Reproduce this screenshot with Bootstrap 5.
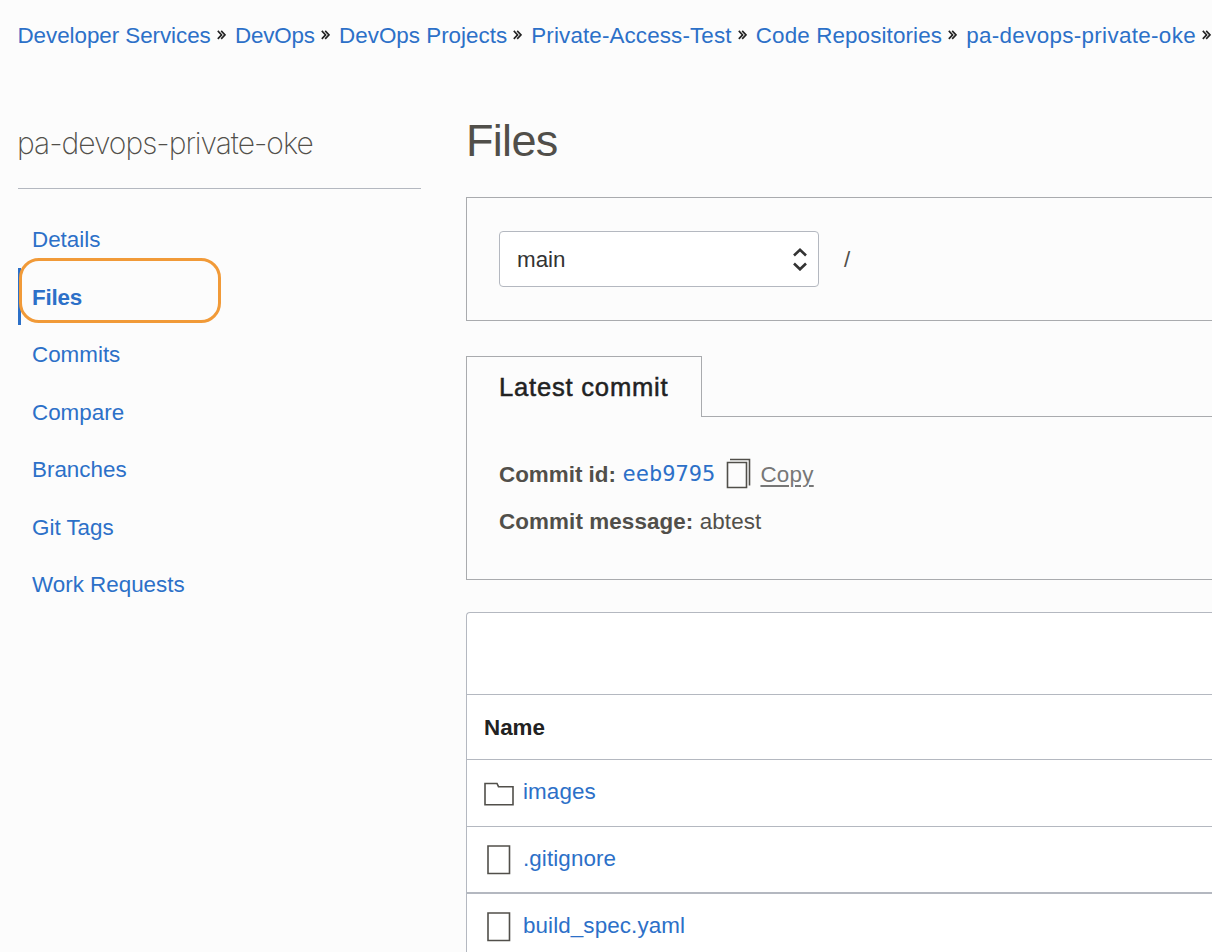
<!DOCTYPE html>
<html lang="en">
<head>
<meta charset="utf-8">
<meta name="viewport" content="width=device-width, initial-scale=1">
<title>pa-devops-private-oke - Files</title>
<link href="https://cdn.jsdelivr.net/npm/bootstrap@5.3.0/dist/css/bootstrap.min.css" rel="stylesheet">
<script src="https://cdn.jsdelivr.net/npm/bootstrap@5.3.0/dist/js/bootstrap.bundle.min.js" defer></script>
<style>
body{background:#fcfcfc;color:#514f4a;font-family:"Liberation Sans",Arial,sans-serif;font-size:22.4px;line-height:30px;overflow:hidden;height:952px}
a{color:#2c70c8;text-decoration:none}
.crumbs{height:70px;padding:2px 0 0 17.5px}
.crumbs svg{margin:0 9px 2px 6.2px;flex:none}
#c1{letter-spacing:-.05px}
#c2{letter-spacing:-.15px}
#c4{letter-spacing:.13px}
#c5{letter-spacing:.12px}
#c6{letter-spacing:.33px}
.side{width:403px;margin-left:18px;margin-right:45px;padding-top:48px}
.side-title{font-family:Inter,sans-serif;font-weight:200;font-size:30px;letter-spacing:-1px;line-height:50px;height:71px;border-bottom:1px solid #b4b8c0;margin-bottom:21px}
.side-title span{margin-left:-1px}
.side .nav-link{height:57.5px;line-height:57.5px;padding:1px 0 0 14px;color:#2c70c8}
.side .active{font-weight:700;letter-spacing:-.2px;box-shadow:inset 3px 0 #2c70c8}
.ring{left:.5px;top:-10px;width:202px;height:65px;border:3px solid #f19a38;border-radius:20px}
h1{font-size:45px;font-weight:400;letter-spacing:-.7px;line-height:50px;padding-top:46px;height:127px;margin:0;color:#514f4a}
.panel{border:1px solid #a9abae;border-right:0}
.path-box{height:124px;padding-left:32px}
.pick{width:320px;height:56px;border:1px solid #b4b8c0;border-radius:4px;background:#fff;color:#333;padding:0 10px 0 17px}
.pick span,.slash{padding-top:2px}
.slash{margin-left:25px}
.tab{width:236px;height:61px;border:1px solid #a9abae;border-bottom:0;margin-top:35px;padding-left:32px;font-size:25.6px;letter-spacing:.78px;color:#222;-webkit-text-stroke:.5px #222}
.tabline{border-bottom:1px solid #a9abae;margin-top:35px;height:61px}
.commit{height:163px;border:1px solid #a9abae;border-width:0 0 1px 1px;padding:41px 0 0 32px}
.commit-id{height:32px;margin-bottom:17px}
.commit-id b{padding-top:2px;margin-right:6.5px}
.hash{font-family:"DejaVu Sans Mono",monospace;font-size:22px}
.icopy{margin:0 9px 0 11.3px}
.copy{color:#777;letter-spacing:.25px;padding-top:2px;text-decoration:underline;text-underline-offset:3px;text-decoration-thickness:1.5px}
.message{letter-spacing:.1px}
.files{margin-top:32px;height:360px;border:1px solid #b4b8c0;border-width:1px 0 0 1px;border-radius:4px 0 0 0;background:#fff}
.frow{border-bottom:1px solid #b4b8c0;padding-left:17px}
.frow svg{margin-right:9px;flex:none}
.frow a{padding-bottom:2px;letter-spacing:.1px}
.frow-top{height:82px}
.frow-head{height:65px;color:#222;padding-top:2px}
.frow-item{height:67px}
.frow-thick{border-bottom-width:2px}
</style>
</head>
<body>
<svg class="d-none"><symbol id="sep" viewBox="0 0 9 10"><path d="M.8.9 4.6 4.9.8 8.9M4.2.9 8 4.9 4.2 8.9" fill="none" stroke="#222" stroke-width="1.6"/></symbol></svg>
<nav class="crumbs d-flex align-items-center text-nowrap">
<a href="#" id="c1">Developer Services</a><svg width="9" height="10"><use href="#sep"/></svg>
<a href="#" id="c2">DevOps</a><svg width="9" height="10"><use href="#sep"/></svg>
<a href="#" id="c3">DevOps Projects</a><svg width="9" height="10"><use href="#sep"/></svg>
<a href="#" id="c4">Private-Access-Test</a><svg width="9" height="10"><use href="#sep"/></svg>
<a href="#" id="c5">Code Repositories</a><svg width="9" height="10"><use href="#sep"/></svg>
<a href="#" id="c6">pa-devops-private-oke</a><svg width="9" height="10"><use href="#sep"/></svg>
</nav>
<div class="d-flex">
<aside class="side flex-shrink-0">
<div class="side-title"><span>pa-devops-private-oke</span></div>
<nav class="nav flex-column">
<a class="nav-link" href="#">Details</a>
<a class="nav-link active position-relative" href="#">Files<span class="ring position-absolute"></span></a>
<a class="nav-link" href="#">Commits</a>
<a class="nav-link" href="#">Compare</a>
<a class="nav-link" href="#">Branches</a>
<a class="nav-link" href="#">Git Tags</a>
<a class="nav-link" href="#">Work Requests</a>
</nav>
</aside>
<main class="flex-grow-1">
<h1>Files</h1>
<section class="panel path-box d-flex align-items-center">
<div class="pick d-flex align-items-center justify-content-between"><span>main</span>
<svg width="16" height="24" viewBox="0 0 16 24" fill="none" stroke="#333" stroke-width="2.6"><path d="M2 8.5 8 2.7 14 8.5M2 16.5 8 22.3 14 16.5"/></svg></div>
<span class="slash">/</span>
</section>
<div class="d-flex"><div class="tab d-flex align-items-center flex-shrink-0">Latest commit</div><div class="tabline flex-grow-1"></div></div>
<section class="commit">
<div class="commit-id d-flex align-items-center"><b>Commit id:</b><a href="#" class="hash">eeb9795</a>
<svg class="icopy" width="25" height="32" viewBox="0 0 25 32" fill="none" stroke="#514f4a" stroke-width="1.6"><path d="M1.5 4.5h19v25h-19zM4 1.5h19.500v26"/></svg>
<a href="#" class="copy">Copy</a></div>
<div class="message"><b>Commit message:</b> <span>abtest</span></div>
</section>
<section class="files">
<div class="frow frow-top"></div>
<div class="frow frow-head d-flex align-items-center fw-bold">Name</div>
<div class="frow frow-item d-flex align-items-center"><svg width="30" height="32" viewBox="0 0 30 32" fill="none" stroke="#514f4a" stroke-width="1.6"><path d="M1 6.5h12l1.5 3.2H29v18H1z"/></svg><a href="#">images</a></div>
<div class="frow frow-item frow-thick d-flex align-items-center"><svg width="30" height="32" viewBox="0 0 30 32" fill="none" stroke="#514f4a" stroke-width="1.6"><path d="M4 2h21.5v27.5H4z"/></svg><a href="#">.gitignore</a></div>
<div class="frow frow-item d-flex align-items-center"><svg width="30" height="32" viewBox="0 0 30 32" fill="none" stroke="#514f4a" stroke-width="1.6"><path d="M4 2h21.5v27.5H4z"/></svg><a href="#">build_spec.yaml</a></div>
</section>
</main>
</div>
</body>
</html>
